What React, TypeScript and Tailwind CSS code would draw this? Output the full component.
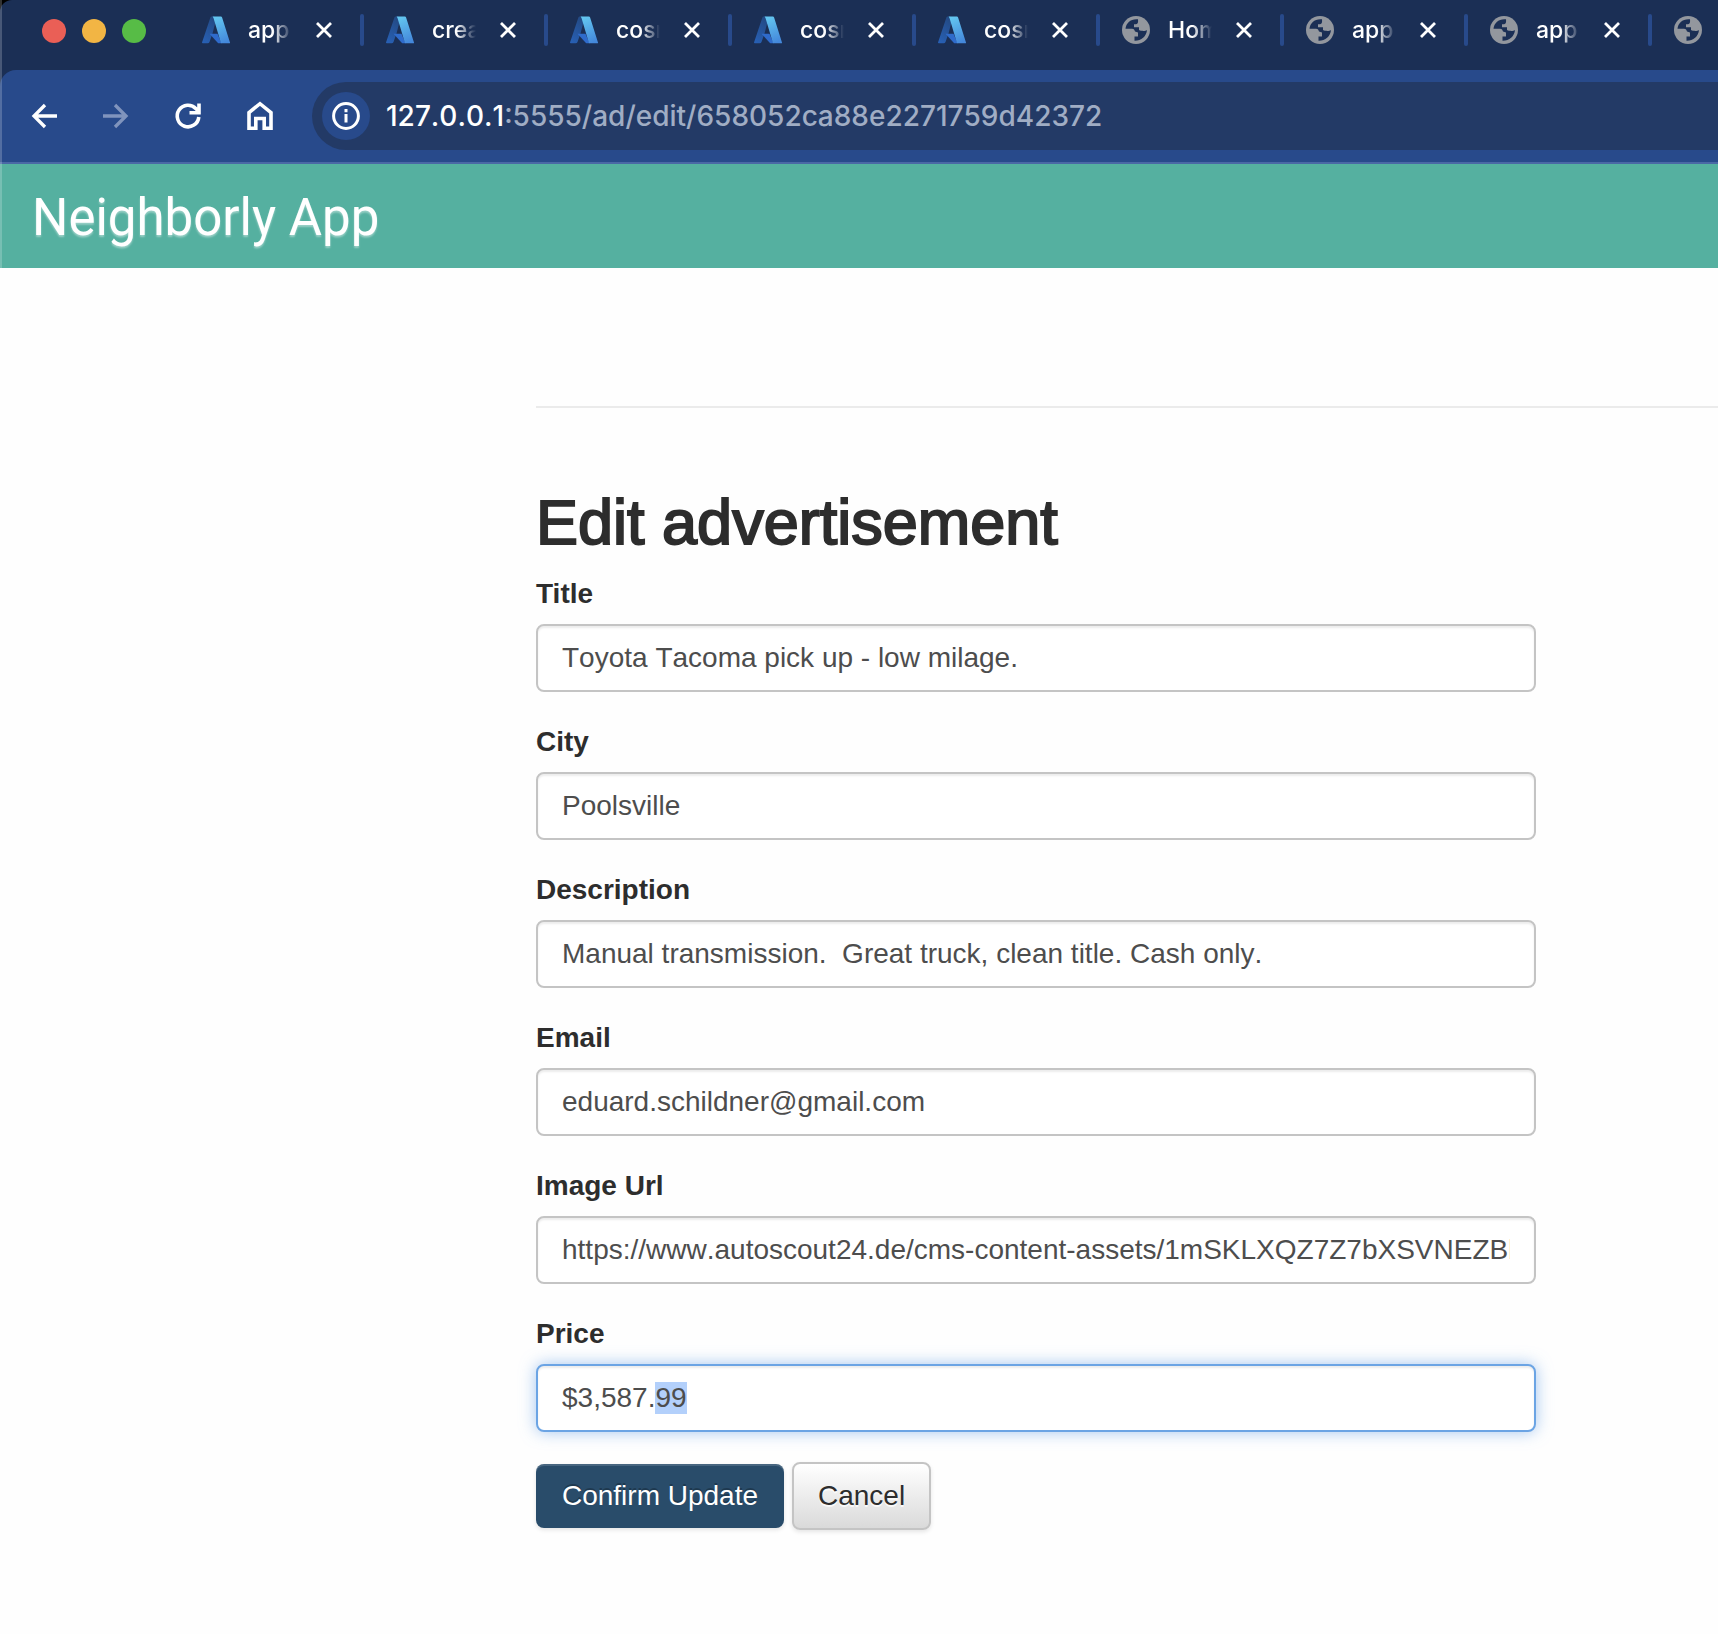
import { useEffect, useRef } from "react";

type Tab = { title: string; icon: "azure" | "globe" };

const tabs: Tab[] = [
  { title: "app", icon: "azure" },
  { title: "crea", icon: "azure" },
  { title: "cosm", icon: "azure" },
  { title: "cosm", icon: "azure" },
  { title: "cosm", icon: "azure" },
  { title: "Hom", icon: "globe" },
  { title: "app", icon: "globe" },
  { title: "app", icon: "globe" },
  { title: "app", icon: "globe" },
];

const fields = [
  { id: "title", label: "Title", value: "Toyota Tacoma pick up - low milage." },
  { id: "city", label: "City", value: "Poolsville" },
  { id: "description", label: "Description", value: "Manual transmission.  Great truck, clean title. Cash only." },
  { id: "email", label: "Email", value: "eduard.schildner@gmail.com" },
  { id: "imgUrl", label: "Image Url", value: "https://www.autoscout24.de/cms-content-assets/1mSKLXQZ7Z7bXSVNEZBbUw" },
  { id: "price", label: "Price", value: "$3,587.99" },
];

function AzureIcon() {
  return (
    <svg viewBox="0 0 28 28" className="size-7 shrink-0" aria-hidden="true">
      <defs>
        <linearGradient id="azLeft" x1="0.6" y1="0" x2="0.2" y2="1">
          <stop offset="0" stopColor="#234a85" />
          <stop offset="1" stopColor="#2860b4" />
        </linearGradient>
        <linearGradient id="azRight" x1="0.3" y1="0" x2="0.6" y2="1">
          <stop offset="0" stopColor="#63c6f0" />
          <stop offset="1" stopColor="#4488db" />
        </linearGradient>
      </defs>
      <path d="M9.800 0.400h2.500L14 4l-3.500 13.600-3 8.300a2 2 0 0 1-1.900 1.400H0.800a.8.8 0 0 1-.7-1.100L8.400 1.400a1.500 1.500 0 0 1 1.400-1z" fill="url(#azLeft)" />
      <path d="M7.500 17.800h8l4 9.500h-2.400a2 2 0 0 1-1.400-.6z" fill="#2f6bcb" />
      <path d="M10.600 0.400h8.200a1.400 1.400 0 0 1 1.300 1l7.800 24.800a.8.8 0 0 1-.8 1.100h-8.100L11.500 2z" fill="url(#azRight)" />
    </svg>
  );
}

function GlobeIcon() {
  return (
    <svg viewBox="0 0 28 28" className="size-7 shrink-0" aria-hidden="true">
      <circle cx="14" cy="14" r="14" fill="#93979e" />
      <path
        d="M16 3.300C9 2.500 4 7 3.500 12.800H10C12 12.800 12.500 14 13 15.500L16 16.500V20.500H12.500V24.800C19 25 24.500 20.500 25 14C23 15.500 19 15 17 14V11.300H12V8.200H14C16 8 16.300 6 16 3.300z"
        fill="#1b2f55"
      />
    </svg>
  );
}

function CloseIcon() {
  return (
    <svg viewBox="0 0 16 16" className="size-4" fill="none" stroke="white" strokeWidth="2.800" aria-hidden="true">
      <path d="M1 1l14 14M15 1L1 15" />
    </svg>
  );
}

function TabItem({ tab }: { tab: Tab }) {
  return (
    <div className="flex w-[184px] shrink-0 items-center">
      <button type="button" className="flex items-center">
        {tab.icon === "azure" ? <AzureIcon /> : <GlobeIcon />}
        <span className="ml-[18px] w-[44px] overflow-hidden whitespace-nowrap text-left text-[23px] font-medium leading-8 text-white [mask-image:linear-gradient(to_right,black_55%,transparent)]">
          {tab.title}
        </span>
      </button>
      <button type="button" aria-label="Close tab" className="ml-6">
        <CloseIcon />
      </button>
      <span className="ml-7 h-8 w-1 rounded-full bg-[#284a8b]" />
    </div>
  );
}

function TabStrip() {
  return (
    <div className="flex h-[70px] items-start overflow-hidden">
      <div className="ml-[42px] mt-[19px] flex shrink-0 gap-4">
        <span className="size-6 rounded-full bg-[#ea5f56]" />
        <span className="size-6 rounded-full bg-[#f2b544]" />
        <span className="size-6 rounded-full bg-[#57bc46]" />
      </div>
      <div className="ml-14 mt-[14px] flex">
        {tabs.map((tab, i) => (
          <TabItem key={i} tab={tab} />
        ))}
      </div>
    </div>
  );
}

function Toolbar() {
  return (
    <div className="flex h-[94px] items-center rounded-tl-2xl border-b-2 border-[#4a68a5] bg-[#284a8b] pl-7 text-white">
      <button type="button" aria-label="Back">
        <svg viewBox="0 0 32 32" className="size-8" fill="none" stroke="currentColor" strokeWidth="3.300">
          <path d="M29 16H6.500M17 5L6 16l11 11" />
        </svg>
      </button>
      <button type="button" aria-label="Forward" disabled className="ml-10 text-[#8094bd]">
        <svg viewBox="0 0 32 32" className="size-8" fill="none" stroke="currentColor" strokeWidth="3.300">
          <path d="M3 16h22.500M15 5l11 11-11 11" />
        </svg>
      </button>
      <button type="button" aria-label="Reload" className="ml-10">
        <svg viewBox="0 0 32 32" className="size-8" fill="none" stroke="currentColor" strokeWidth="3.600">
          <path d="M26.800 17a10.800 10.800 0 1 1-2.800-8.300l2.500 3M27 3.500v9.200H17.500" />
        </svg>
      </button>
      <button type="button" aria-label="Home" className="ml-10">
        <svg viewBox="0 0 32 32" className="size-8" fill="none" stroke="currentColor" strokeWidth="3.600">
          <path d="M5 28.200V12.500L16 3.700l11 8.800v15.700h-6.800V18.500h-8.400v9.700z" />
        </svg>
      </button>
      <div className="ml-9 flex h-[68px] grow items-center rounded-l-full bg-[#233a66] pl-[10px]">
        <button type="button" aria-label="Site information" className="flex size-12 items-center justify-center rounded-full bg-[#284a8b]">
          <svg viewBox="0 0 28 28" className="size-7" fill="none" stroke="currentColor" strokeWidth="3">
            <circle cx="14" cy="14" r="12.400" />
            <path d="M14 12v8.500M14 7v3.200" />
          </svg>
        </button>
        <div className="ml-4 whitespace-nowrap text-[28px] font-medium leading-10 text-[#a0adc4] [font-kerning:none]">
          <span className="text-white">127.0.0.1</span>:5555/ad/edit/658052ca88e2271759d42372
        </div>
      </div>
    </div>
  );
}

function EditForm() {
  const priceRef = useRef<HTMLInputElement>(null);

  useEffect(() => {
    const input = priceRef.current;
    if (input) {
      input.focus();
      input.setSelectionRange(7, 9);
    }
  }, []);

  return (
    <form className="w-full max-w-[1000px]" onSubmit={(e) => e.preventDefault()}>
      {fields.map((f) => (
        <div key={f.id} className="mb-[30px]">
          <label htmlFor={f.id} className="mb-[10px] block text-[28px] font-bold leading-10 text-[#2d2d2d]">
            {f.label}
          </label>
          <input
            id={f.id}
            ref={f.id === "price" ? priceRef : undefined}
            defaultValue={f.value}
            className="block h-[68px] w-full rounded-lg border-2 border-[#c4c4c4] bg-white px-6 text-[28px] text-[#4d4d4d] [font-kerning:none] shadow-[inset_0_2px_2px_rgba(0,0,0,0.075)] outline-none selection:bg-[#b3d0fb] selection:text-[#4d4d4d] focus:border-[#6ba4e4] focus:shadow-[inset_0_2px_2px_rgba(0,0,0,0.075),0_0_16px_rgba(102,160,230,0.6)]"
          />
        </div>
      ))}
      <div className="flex items-center gap-2">
        <button
          type="submit"
          className="h-16 w-[248px] rounded-lg bg-[#294c6a] text-[28px] text-white shadow-[inset_0_2px_0_rgba(255,255,255,0.15),0_2px_4px_rgba(0,0,0,0.1)] [text-shadow:0_-2px_0_rgba(0,0,0,0.25)]"
        >
          Confirm Update
        </button>
        <button
          type="button"
          className="h-[68px] rounded-lg border-2 border-[#c4c4c4] bg-linear-to-b from-white to-[#dadada] px-6 text-[28px] text-[#2d2d2d] shadow-[0_2px_4px_rgba(0,0,0,0.1)] [text-shadow:0_2px_0_rgba(255,255,255,0.75)]"
        >
          Cancel
        </button>
      </div>
    </form>
  );
}

export default function App() {
  return (
    <div className="min-h-screen overflow-x-hidden bg-[#fefefe]">
      <div className="relative bg-black">
        <div className="rounded-tl-xl bg-[#1b2f55] font-['Inter',sans-serif]">
          <TabStrip />
          <Toolbar />
        </div>
        <header className="flex h-[104px] items-center bg-[#55b0a0] pl-8 pt-1">
          <a href="/" className="font-['Roboto',sans-serif] text-[51px] text-white [text-shadow:0_2px_2px_rgba(255,255,255,0.4)]">
            Neighborly App
          </a>
        </header>
        <div className="absolute inset-y-0 left-0 w-0.5 bg-white/20" />
      </div>
      <main className="ml-[536px] pt-[138px] font-['Liberation_Sans',Arial,sans-serif]">
        <hr className="border-t-2 border-[#ebebeb]" />
        <h1 className="mt-[74px] text-[63px] leading-20 text-[#2d2d2d] [-webkit-text-stroke:2px_#2d2d2d]">Edit advertisement</h1>
        <div className="mt-3">
          <EditForm />
        </div>
      </main>
    </div>
  );
}
